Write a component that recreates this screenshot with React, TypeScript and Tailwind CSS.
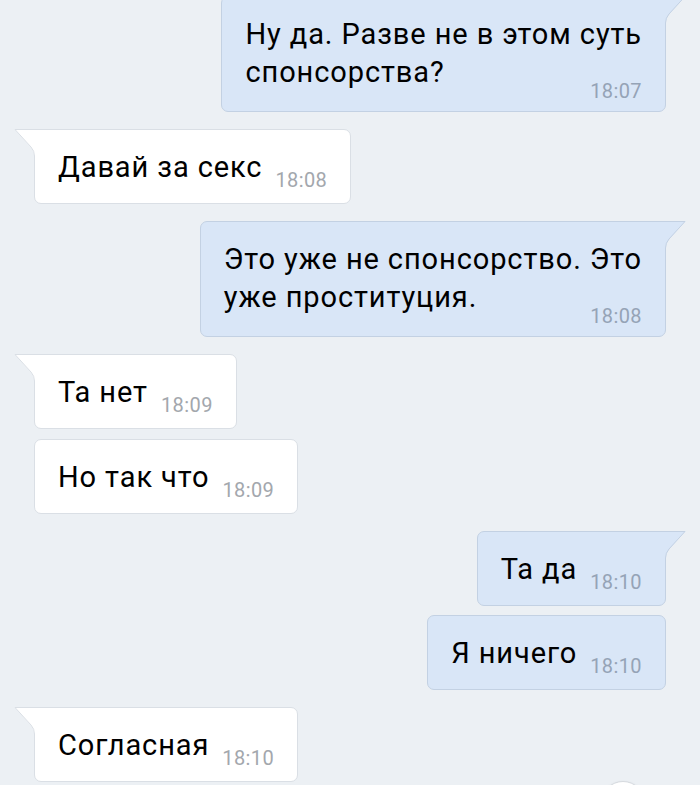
import React from "react";

type Msg = {
  out: boolean;
  lines: string[];
  time: string;
  tail: boolean;
  mt: string;
};

const messages: Msg[] = [
  { out: true, lines: ["Ну да. Разве не в этом суть", "спонсорства?"], time: "18:07", tail: true, mt: "mt-[-4px]" },
  { out: false, lines: ["Давай за секс"], time: "18:08", tail: true, mt: "mt-[17px]" },
  { out: true, lines: ["Это уже не спонсорство. Это", "уже проституция."], time: "18:08", tail: true, mt: "mt-[17px]" },
  { out: false, lines: ["Та нет"], time: "18:09", tail: true, mt: "mt-[17px]" },
  { out: false, lines: ["Но так что"], time: "18:09", tail: false, mt: "mt-[10px]" },
  { out: true, lines: ["Та да"], time: "18:10", tail: true, mt: "mt-[17px]" },
  { out: true, lines: ["Я ничего"], time: "18:10", tail: false, mt: "mt-[9px]" },
  { out: false, lines: ["Согласная"], time: "18:10", tail: true, mt: "mt-[17px]" },
];

function Tail({ out }: { out: boolean }) {
  if (out) {
    return (
      <svg
        className="absolute top-[-1px] left-full"
        width="21"
        height="27"
        viewBox="0 0 21 27"
      >
        <path d="M0 0 H20.5 L4.5 18 Q1 22 1 27 H0 Z" fill="#d9e6f7" />
        <path
          d="M0 0.5 H20 L4 18 Q0.5 22 0.5 27"
          fill="none"
          stroke="#c3d1e3"
          strokeWidth="1"
        />
      </svg>
    );
  }
  return (
    <svg
      className="absolute top-[-1px] right-full"
      width="21"
      height="27"
      viewBox="0 0 21 27"
    >
      <path d="M21 0 H0.5 L16.5 18 Q20 22 20 27 H21 Z" fill="#ffffff" />
      <path
        d="M21 0.5 H1 L17 18 Q20.5 22 20.5 27"
        fill="none"
        stroke="#dadfe5"
        strokeWidth="1"
      />
    </svg>
  );
}

function Bubble({ m }: { m: Msg }) {
  const multi = m.lines.length > 1;
  const last = m.lines[m.lines.length - 1];
  return (
    <div
      className={`relative rounded-[7px] border pl-[23px] pr-[23px] pt-[18px] ${
        multi ? "pb-[20px]" : "pb-[17px]"
      } ${
        m.out
          ? "bg-[#d9e6f7] border-[#c3d1e3]"
          : "bg-white border-[#dadfe5]"
      } ${m.tail ? (m.out ? "rounded-tr-none" : "rounded-tl-none") : ""}`}
    >
      {m.tail && <Tail out={m.out} />}
      {m.lines.slice(0, -1).map((l) => (
        <div key={l} className="leading-[38px] whitespace-nowrap">
          {l}
        </div>
      ))}
      <div className="flex items-end justify-between">
        <span className="leading-[38px] whitespace-nowrap">{last}</span>
        <span
          className={`ml-[13px] text-[20px] leading-[20px] tracking-[0.4px] whitespace-nowrap ${
            multi ? "mb-[-10px]" : "mb-[-4px]"
          } ${m.out ? "text-[#95a3b6]" : "text-[#a3a7ad]"}`}
        >
          {m.time}
        </span>
      </div>
    </div>
  );
}

export default function App() {
  return (
    <div
      className="relative w-[700px] h-[785px] overflow-hidden bg-[#ecf0f4] text-[29px] tracking-[0.9px] text-black"
      style={{ fontFamily: "Roboto, 'Noto Sans', sans-serif" }}
    >
      <div className="flex flex-col">
        {messages.map((m, i) => (
          <div
            key={i}
            className={`flex ${m.mt} ${
              m.out ? "justify-end pr-[34px]" : "justify-start pl-[34px]"
            }`}
          >
            <Bubble m={m} />
          </div>
        ))}
      </div>
      {/* scroll down button, only the top edge shows */}
      <div className="absolute left-[601px] top-[781px] w-[44px] h-[44px] rounded-full bg-white border border-[#d6dadf] shadow-sm" />
    </div>
  );
}
